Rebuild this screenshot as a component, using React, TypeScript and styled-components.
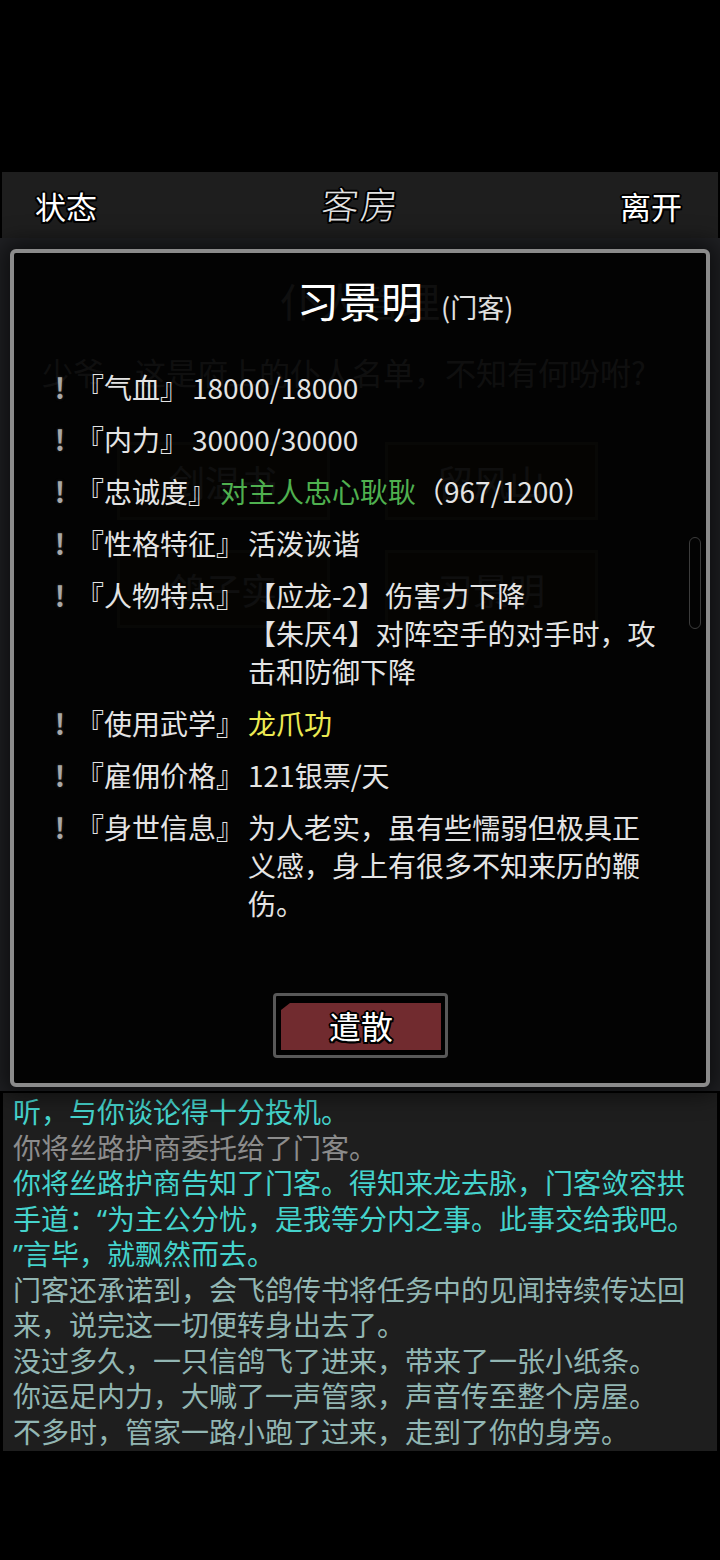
import React from 'react';
import styled, { createGlobalStyle } from 'styled-components';

const GlobalStyle = createGlobalStyle`
  html, body {
    margin: 0;
    padding: 0;
    background: #000;
  }
  body {
    font-family: "Noto Sans CJK SC", "Noto Sans", sans-serif;
  }
`;

const outline = `
  -1.5px -1.5px 0 #000, 1.5px -1.5px 0 #000, -1.5px 1.5px 0 #000, 1.5px 1.5px 0 #000,
  0 -2px 0 #000, 0 2px 0 #000, -2px 0 0 #000, 2px 0 0 #000
`;

const Screen = styled.div`
  width: 720px;
  height: 1560px;
  display: flex;
  flex-direction: column;
  background: #000;
  overflow: hidden;
`;

const TopSpace = styled.div`
  height: 172px;
  flex-shrink: 0;
`;

const Header = styled.div`
  height: 66px;
  margin: 0 2px;
  padding: 0 32px 0 33px;
  background: #1e1e1e;
  display: flex;
  align-items: center;
  justify-content: space-between;
  flex-shrink: 0;
`;

const HeaderButton = styled.div`
  font-size: 31px;
  font-weight: 400;
  color: #fff;
  text-shadow: ${outline};
  width: 66px;
`;

const HeaderTitle = styled.div`
  font-size: 37px;
  font-weight: 300;
  color: #e2e2e2;
  letter-spacing: 2px;
  text-shadow: ${outline};
  transform: skewX(-6deg);
  margin-top: -4px;
`;

const Main = styled.div`
  position: relative;
  height: 853px;
  flex-shrink: 0;
  background: #202124;
`;

/* page under the dialog, only seen through it */
const Underlay = styled.div`
  display: flex;
  flex-direction: column;
  align-items: center;
  padding-top: 36px;
  color: #a8a8a8;
`;

const UnderTitle = styled.div`
  font-size: 40px;
  line-height: 52px;
`;

const UnderText = styled.div`
  align-self: flex-start;
  margin: 26px 0 0 42px;
  font-size: 31px;
  line-height: 40px;
`;

const UnderGrid = styled.div`
  display: grid;
  grid-template-columns: 213px 213px;
  column-gap: 55px;
  row-gap: 30px;
  margin-top: 50px;
  margin-left: -6px;
`;

const UnderButton = styled.div`
  height: 78px;
  border: 3px solid #5e5a40;
  background: #36331f;
  box-sizing: border-box;
  display: flex;
  align-items: center;
  justify-content: center;
  font-size: 36px;
`;

const Dialog = styled.div`
  position: absolute;
  top: 11px;
  left: 10px;
  right: 10px;
  bottom: 4px;
  border: 4px solid #8b8b8b;
  border-radius: 6px;
  background: rgba(0, 0, 0, 0.91);
  box-shadow: 0 0 22px 8px rgba(0, 0, 0, 0.55);
  display: flex;
  flex-direction: column;
`;

const DialogTitle = styled.div`
  display: grid;
  grid-template-columns: 1fr auto 1fr;
  align-items: baseline;
  column-gap: 18px;
  margin-top: 21px;
`;

const Name = styled.span`
  grid-column: 2;
  font-size: 42px;
  line-height: 52px;
  color: #fff;
`;

const Role = styled.span`
  font-size: 27px;
  color: #e0e0e0;
`;

const RowList = styled.div`
  display: flex;
  flex-direction: column;
  gap: 14px;
  margin-top: 42px;
  padding-left: 40px;
`;

const Row = styled.div`
  display: flex;
  align-items: flex-start;
  font-size: 28px;
  line-height: 38px;
  color: #e4e4e4;
`;

const Bang = styled.span`
  width: 12px;
  flex-shrink: 0;
  text-align: center;
  font-weight: 700;
  color: #a8a8a8;
  margin-right: 10px;
  text-shadow: 0 0 3px #333;
`;

const Label = styled.span`
  flex-shrink: 0;
  white-space: nowrap;
`;

const Value = styled.span`
  white-space: nowrap;
  margin-left: 4px;
`;

const Tone = styled.span<{ $color: string }>`
  color: ${(p) => p.$color};
`;

const Scrollbar = styled.div`
  position: absolute;
  top: 284px;
  right: 5px;
  width: 10px;
  height: 90px;
  border: 1.5px solid #3c3c3c;
  border-radius: 6px;
`;

const Footer = styled.div`
  flex: 1;
  display: flex;
  align-items: flex-end;
  justify-content: center;
  padding-bottom: 25px;
`;

const ButtonFrame = styled.div`
  width: 175px;
  height: 65px;
  box-sizing: border-box;
  border: 3px solid #585858;
  border-radius: 4px;
  background: #000;
  padding: 7px 4px 5px 5px;
  margin-left: 1px;
`;

const ButtonFace = styled.div`
  height: 100%;
  background: #712b2f;
  clip-path: polygon(9px 0, 100% 0, 100% 100%, 0 100%, 0 7px);
  display: flex;
  align-items: center;
  justify-content: center;
  font-size: 32px;
  font-weight: 400;
  color: #fff;
  text-shadow: ${outline};
  padding-bottom: 3px;
  box-sizing: border-box;
`;

const Log = styled.div`
  margin: 2px 3px 0;
  height: 358px;
  flex-shrink: 0;
  background: #1e1e1e;
  padding: 2px 0 0 10px;
  box-sizing: border-box;
  font-family: "Noto Sans", "Noto Sans CJK SC", sans-serif;
  font-size: 28px;
  line-height: 35.5px;
  white-space: nowrap;
  overflow: hidden;
`;

const LogEntry = styled.div<{ $color: string }>`
  color: ${(p) => p.$color};
`;

type Stat = { label: string; lines: React.ReactNode[] };

const stats: Stat[] = [
  { label: '『气血』', lines: ['18000/18000'] },
  { label: '『内力』', lines: ['30000/30000'] },
  {
    label: '『忠诚度』',
    lines: [
      <>
        <Tone $color="#4fb04f">对主人忠心耿耿</Tone>（967/1200）
      </>,
    ],
  },
  { label: '『性格特征』', lines: ['活泼诙谐'] },
  {
    label: '『人物特点』',
    lines: ['【应龙-2】伤害力下降', '【朱厌4】对阵空手的对手时，攻', '击和防御下降'],
  },
  { label: '『使用武学』', lines: [<Tone $color="#ecea52">龙爪功</Tone>] },
  { label: '『雇佣价格』', lines: ['121银票/天'] },
  {
    label: '『身世信息』',
    lines: ['为人老实，虽有些懦弱但极具正', '义感，身上有很多不知来历的鞭', '伤。'],
  },
];

const CYAN = '#45d3cc';
const GREY = '#8c8c8c';
const TEAL = '#92b6b3';

const log: { color: string; lines: string[] }[] = [
  { color: CYAN, lines: ['听，与你谈论得十分投机。'] },
  { color: GREY, lines: ['你将丝路护商委托给了门客。'] },
  {
    color: CYAN,
    lines: [
      '你将丝路护商告知了门客。得知来龙去脉，门客敛容拱',
      '手道：“为主公分忧，是我等分内之事。此事交给我吧。',
      '”言毕，就飘然而去。',
    ],
  },
  {
    color: TEAL,
    lines: ['门客还承诺到，会飞鸽传书将任务中的见闻持续传达回', '来，说完这一切便转身出去了。'],
  },
  { color: TEAL, lines: ['没过多久，一只信鸽飞了进来，带来了一张小纸条。'] },
  { color: TEAL, lines: ['你运足内力，大喊了一声管家，声音传至整个房屋。'] },
  { color: TEAL, lines: ['不多时，管家一路小跑了过来，走到了你的身旁。'] },
];

const App: React.FC = () => {
  return (
    <>
      <GlobalStyle />
      <Screen>
        <TopSpace />
        <Header>
          <HeaderButton>状态</HeaderButton>
          <HeaderTitle>客房</HeaderTitle>
          <HeaderButton>离开</HeaderButton>
        </Header>
        <Main>
          <Underlay>
            <UnderTitle>仆人管理</UnderTitle>
            <UnderText>少爷，这是府上的仆人名单，不知有何吩咐?</UnderText>
            <UnderGrid>
              <UnderButton>剑温书</UnderButton>
              <UnderButton>留风山</UnderButton>
              <UnderButton>鸽子实</UnderButton>
              <UnderButton>习景明</UnderButton>
            </UnderGrid>
          </Underlay>
          <Dialog>
            <DialogTitle>
              <Name>习景明</Name>
              <Role>(门客)</Role>
            </DialogTitle>
            <RowList>
              {stats.map((s) => (
                <Row key={s.label}>
                  <Bang>!</Bang>
                  <Label>{s.label}</Label>
                  <Value>
                    {s.lines.map((line, i) => (
                      <div key={i}>{line}</div>
                    ))}
                  </Value>
                </Row>
              ))}
            </RowList>
            <Footer>
              <ButtonFrame>
                <ButtonFace>遣散</ButtonFace>
              </ButtonFrame>
            </Footer>
            <Scrollbar />
          </Dialog>
        </Main>
        <Log>
          {log.map((entry, i) => (
            <LogEntry key={i} $color={entry.color}>
              {entry.lines.map((line, j) => (
                <div key={j}>{line}</div>
              ))}
            </LogEntry>
          ))}
        </Log>
      </Screen>
    </>
  );
};

export default App;
